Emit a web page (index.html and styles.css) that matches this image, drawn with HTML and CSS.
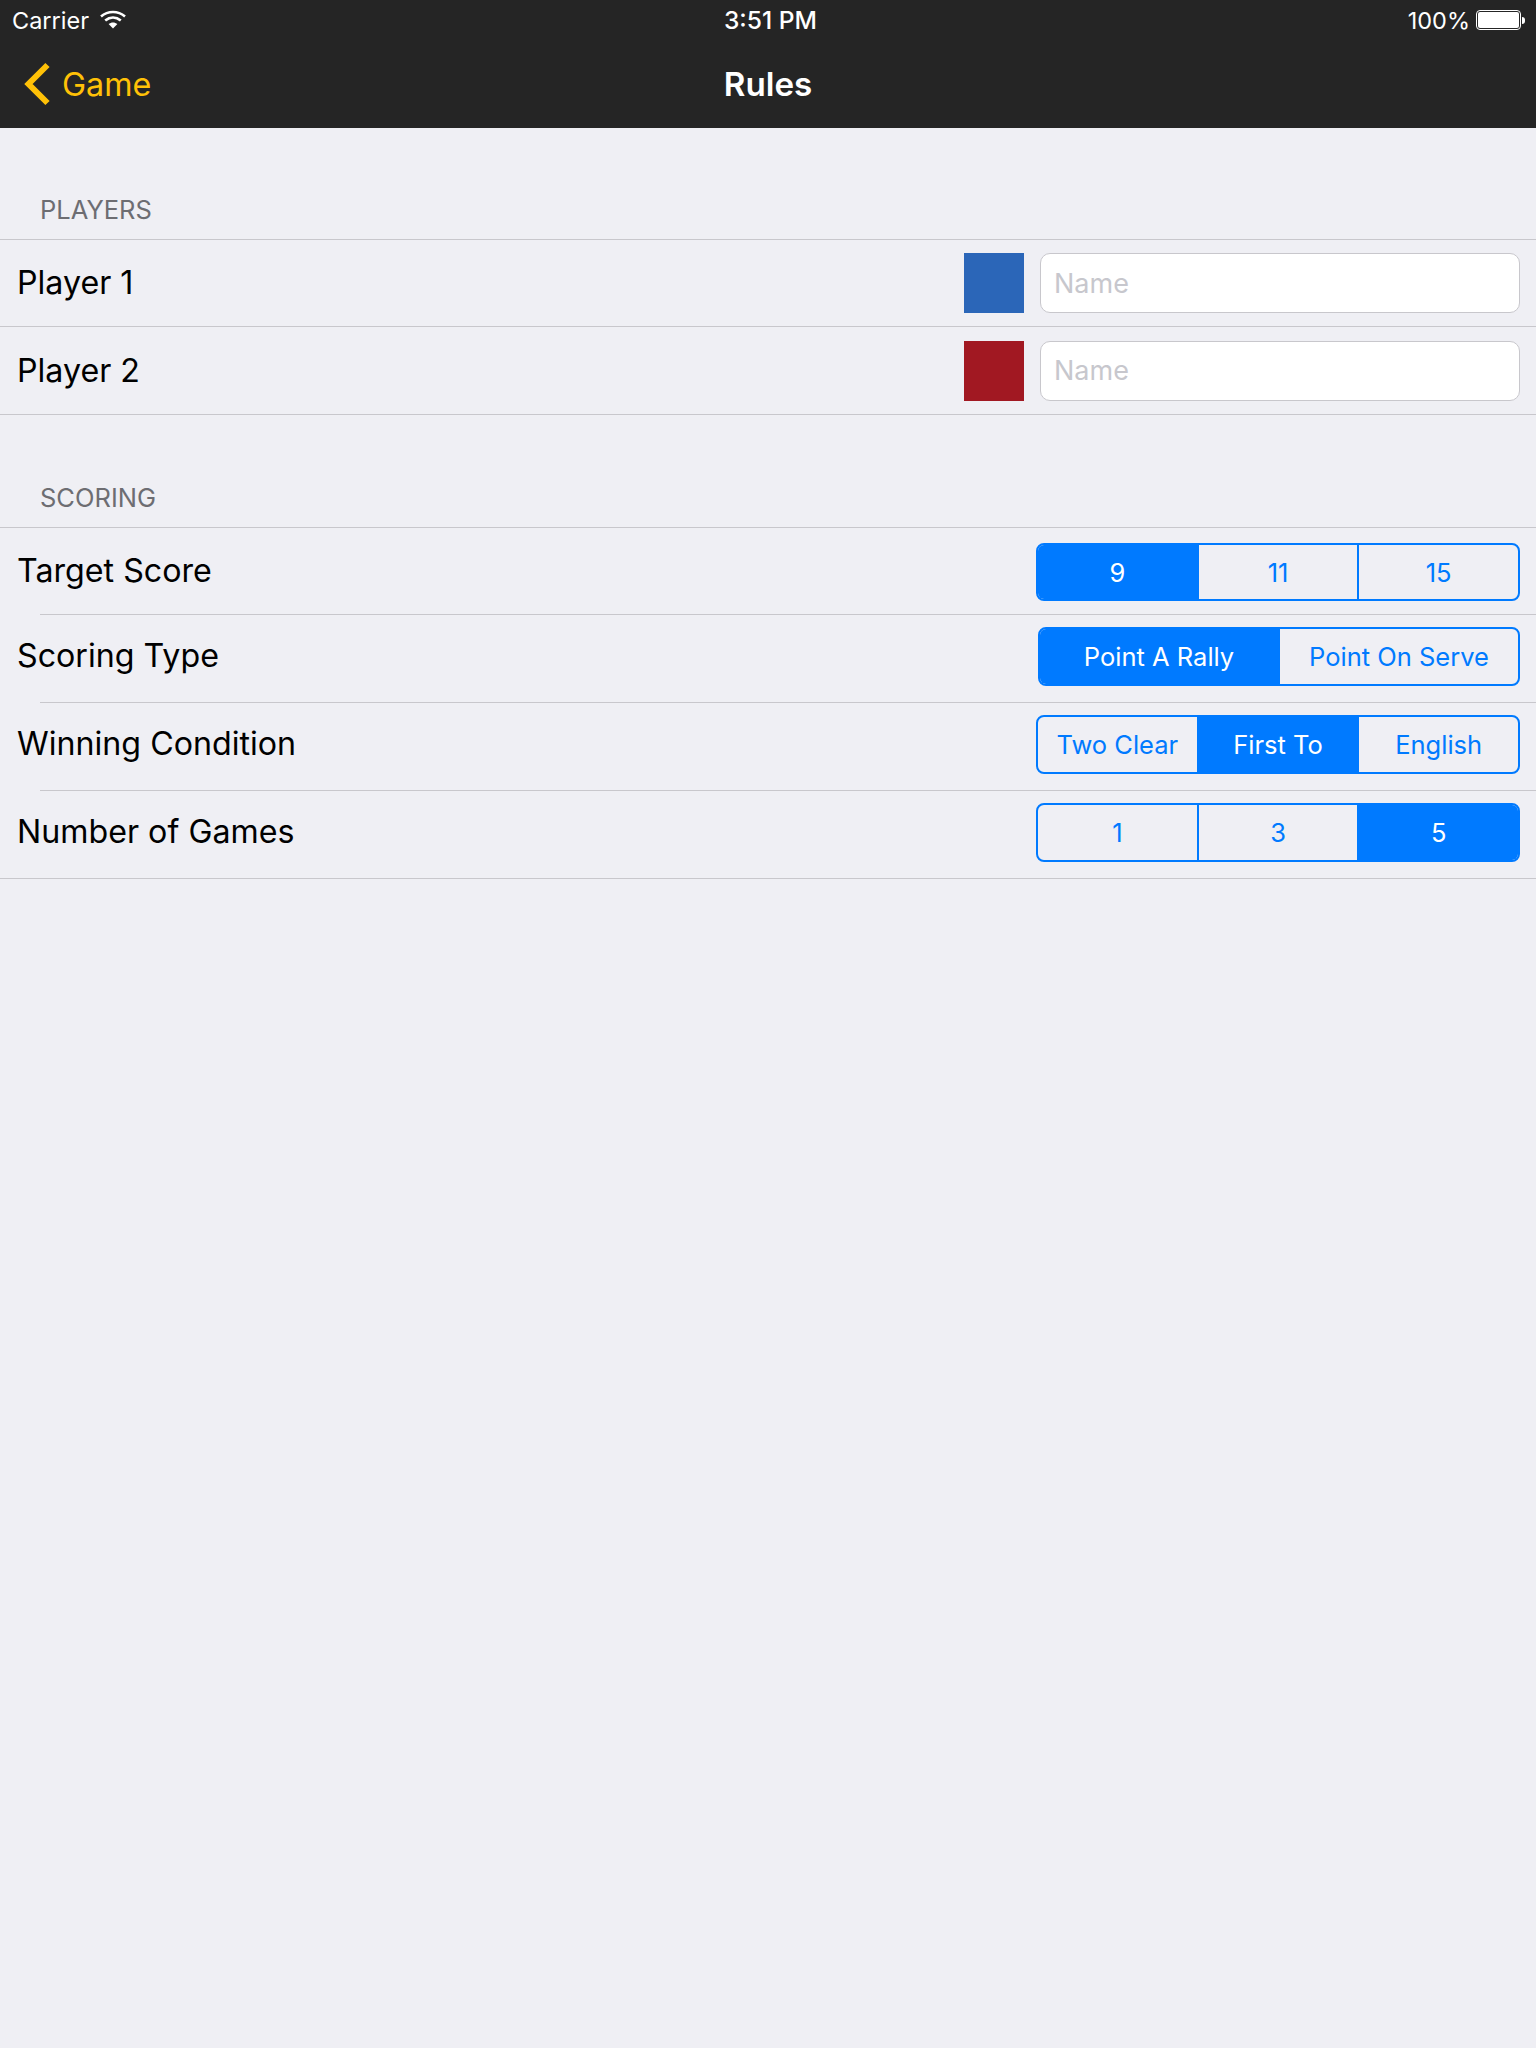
FILE: index.html
```html
<!DOCTYPE html>
<html lang="en">
<head>
  <meta charset="UTF-8" />
  <title>Rules</title>
  <link rel="stylesheet" href="styles.css">
</head>
<body>
  <header class="topbar">
    <div class="status">
      <div class="status-left">
        <span>Carrier</span>
        <svg class="wifi" width="26" height="19" viewBox="0 0 26 19">
          <path d="M1 6.5C8 .5 18 .5 25 6.5" fill="none" stroke="#fff" stroke-width="2.6"/>
          <path d="M5.2 10.6C10 6.6 16 6.6 20.8 10.6" fill="none" stroke="#fff" stroke-width="2.6"/>
          <path d="M8.6 14C11.2 11.9 14.8 11.9 17.4 14L13 18.6Z" fill="#fff"/>
        </svg>
      </div>
      <div class="status-time">3:51 PM</div>
      <div class="status-right">
        <span>100%</span>
        <div class="battery"><div class="battery-fill"></div></div>
        <div class="battery-nub"></div>
      </div>
    </div>
    <nav class="nav">
      <div class="back">
        <svg width="27" height="44" viewBox="0 0 27 44">
          <path d="M23.5 3L4.5 22L23.5 41" fill="none" stroke="#ffc107" stroke-width="6"/>
        </svg>
        <span>Game</span>
      </div>
      <div class="nav-title">Rules</div>
    </nav>
  </header>

  <section class="group group-players">
    <h2>PLAYERS</h2>
    <div class="list">
      <div class="row row-first">
        <span class="label">Player 1</span>
        <div class="swatch blue"></div>
        <input class="name" type="text" placeholder="Name">
      </div>
      <div class="line"></div>
      <div class="row">
        <span class="label">Player 2</span>
        <div class="swatch red"></div>
        <input class="name" type="text" placeholder="Name">
      </div>
    </div>
  </section>

  <section class="group group-scoring">
    <h2>SCORING</h2>
    <div class="list">
      <div class="row row-first">
        <span class="label">Target Score</span>
        <div class="segments">
          <div class="seg on">9</div>
          <div class="seg">11</div>
          <div class="seg">15</div>
        </div>
      </div>
      <div class="line inset"></div>
      <div class="row">
        <span class="label">Scoring Type</span>
        <div class="segments two">
          <div class="seg on">Point A Rally</div>
          <div class="seg">Point On Serve</div>
        </div>
      </div>
      <div class="line inset"></div>
      <div class="row">
        <span class="label">Winning Condition</span>
        <div class="segments">
          <div class="seg">Two Clear</div>
          <div class="seg on">First To</div>
          <div class="seg">English</div>
        </div>
      </div>
      <div class="line inset"></div>
      <div class="row">
        <span class="label">Number of Games</span>
        <div class="segments">
          <div class="seg">1</div>
          <div class="seg">3</div>
          <div class="seg on">5</div>
        </div>
      </div>
    </div>
  </section>
</body>
</html>
```

FILE: styles.css
```css
* {
  box-sizing: border-box;
}

body {
  margin: 0;
  min-height: 2048px;
  background-color: #efeff4;
  font-family: Inter, "Liberation Sans", sans-serif;
  color: #000;
}

.topbar {
  height: 128px;
  background-color: #252525;
  color: #fff;
}

.status {
  height: 40px;
  padding: 0 11px 0 12px;
  display: grid;
  grid-template-columns: 1fr auto 1fr;
  align-items: center;
  font-size: 23.5px;
}

.status-left {
  display: flex;
  align-items: center;
  gap: 11px;
}

.wifi {
  margin-top: -1px;
}

.status-time {
  font-size: 24.6px;
  font-weight: 500;
  margin-left: 4px;
}

.status-right {
  display: flex;
  align-items: center;
  justify-content: flex-end;
}

.battery {
  width: 45px;
  height: 20px;
  margin-left: 6px;
  padding: 1px;
  border: 1px solid #fff;
  border-radius: 4px;
}

.battery-fill {
  height: 100%;
  background-color: #fff;
  border-radius: 2px;
}

.battery-nub {
  width: 3px;
  height: 7px;
  margin-left: 1px;
  background-color: #fff;
  border-radius: 0 3px 3px 0;
}

.nav {
  height: 88px;
  position: relative;
  display: flex;
  align-items: center;
  justify-content: center;
}

.back {
  position: absolute;
  left: 24px;
  top: 22px;
  display: flex;
  align-items: center;
  gap: 11px;
  color: #ffc107;
  font-size: 32.3px;
}

.nav-title {
  font-size: 33.2px;
  font-weight: 600;
}

.group-players {
  padding-top: 64px;
}

.group-scoring {
  padding-top: 65px;
}

h2 {
  margin: 0;
  height: 47px;
  padding: 0 0 0 40px;
  line-height: 36px;
  font-size: 25.5px;
  font-weight: 400;
  color: #6d6d72;
}

.list {
  border-top: 1px solid #c8c7cc;
  border-bottom: 1px solid #c8c7cc;
}

.row {
  height: 87px;
  padding: 0 16px 0 17px;
  display: flex;
  align-items: center;
  justify-content: flex-end;
}

.row-first {
  height: 86px;
}

.label {
  margin-right: auto;
  margin-bottom: 1px;
  font-size: 32.2px;
}

.line {
  height: 1px;
  background-color: #c8c7cc;
}

.line.inset {
  margin-left: 40px;
}

.swatch {
  width: 60px;
  height: 60px;
  margin-right: 16px;
}

.blue {
  background-color: #2b66b8;
}

.red {
  background-color: #a11822;
}

.name {
  width: 480px;
  height: 60px;
  padding: 0 13px;
  border: 1px solid #c8c7cc;
  border-radius: 10px;
  background-color: #fff;
  font-family: inherit;
  font-size: 27px;
}

.name::placeholder {
  color: #c7c7cd;
  opacity: 1;
}

/* scoring rows sit a little above centre, like the screenshot */
.group-scoring .row {
  padding-bottom: 4px;
}

.group-scoring .row .label {
  margin-bottom: 2px;
}

.group-scoring .row-first {
  padding-bottom: 2px;
}

.group-scoring .row-first .label {
  margin-bottom: 0;
}

.group-scoring .row-first .segments {
  height: 58px;
  margin-top: 4px;
}

.segments {
  width: 484px;
  height: 59px;
  display: flex;
  border: 2px solid #007aff;
  border-radius: 8px;
  overflow: hidden;
  font-size: 25.5px;
  color: #007aff;
}

.segments.two {
  width: 482px;
}

.seg {
  flex: 1 1 0;
  display: flex;
  align-items: center;
  justify-content: center;
  border-left: 2px solid #007aff;
}

.seg:first-child {
  border-left: none;
}

.two .seg:first-child {
  flex: 0 0 238px;
}

.seg.on {
  background-color: #007aff;
  color: #fff;
}
```
